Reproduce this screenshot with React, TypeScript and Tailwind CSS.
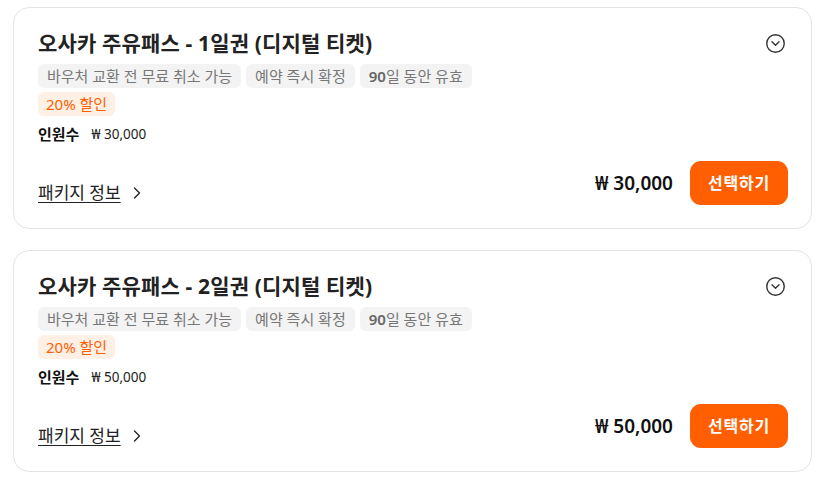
import { CircleChevronDown, ChevronRight } from "lucide-react";

const font = { fontFamily: '"Noto Sans", "Noto Sans CJK KR", sans-serif' };

function Card({ day, price }: { day: string; price: string }) {
  return (
    <div className="w-[799px] rounded-2xl border border-[#e4e4e4] bg-white pl-[24px] pr-[23px] pt-[21px] pb-[23px]">
      <div className="flex items-center justify-between">
        <h2 className="text-[21px] leading-[28px] tracking-[0.15px] font-bold text-[#222]">
          오사카 주유패스 - {day}일권 (디지털 티켓)
        </h2>
        <CircleChevronDown size={21} strokeWidth={1.6} className="mr-[2px] text-[#333]" />
      </div>
      <div className="mt-[7px] flex gap-[5px]">
        <span className="h-[24px] rounded-md bg-[#f3f3f3] px-[9px] text-[15px] leading-[24px] text-[#777]">
          바우처 교환 전 무료 취소 가능
        </span>
        <span className="h-[24px] rounded-md bg-[#f3f3f3] px-[9px] text-[15px] leading-[24px] text-[#777]">
          예약 즉시 확정
        </span>
        <span className="h-[24px] rounded-md bg-[#f3f3f3] px-[9px] text-[15px] leading-[24px] text-[#777]">
          <span className="font-semibold text-[#666]">90</span>일 동안 유효
        </span>
      </div>
      <div className="mt-[4px] flex">
        <span className="h-[24px] rounded-md bg-[#fff0e5] px-[8px] text-[15px] leading-[24px] font-normal text-[#ff5f00]">
          20% 할인
        </span>
      </div>
      <div className="mt-[8px] flex items-center text-[#111] leading-[20px]">
        <span className="text-[15px] font-bold">인원수</span>
        <span className="ml-[12px] text-[13.5px] text-[#222]">₩ {price}</span>
      </div>
      <div className="mt-[17px] flex items-end justify-between">
        <a className="flex items-center text-[17px] leading-[24px] text-[#222] underline underline-offset-[3px]">
          패키지 정보
          <ChevronRight size={20} strokeWidth={1.6} className="ml-[6px] text-[#222]" />
        </a>
        <div className="flex items-center">
          <span className="mr-[17px] text-[19px] font-semibold text-[#111]">₩ {price}</span>
          <button className="h-[44px] w-[98px] rounded-[11px] bg-[#ff5f00] text-[16px] tracking-[0.8px] font-bold text-white">
            선택하기
          </button>
        </div>
      </div>
    </div>
  );
}

export default function App() {
  return (
    <div style={font} className="min-h-[486px] bg-white pl-[13px] pt-[7px] flex flex-col gap-[21px]">
      <Card day="1" price="30,000" />
      <Card day="2" price="50,000" />
    </div>
  );
}
